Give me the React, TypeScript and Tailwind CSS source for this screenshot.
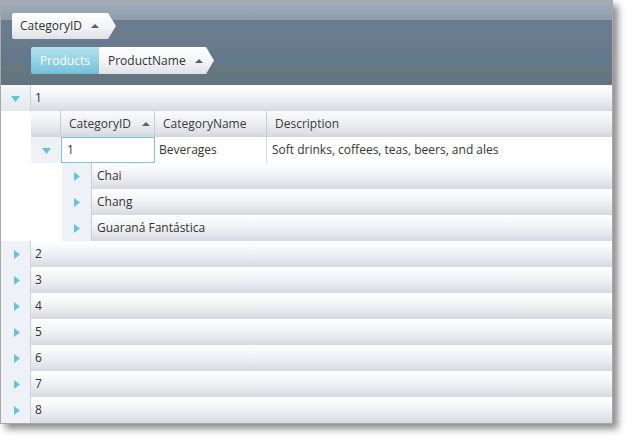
import React from 'react';

const rowBg = 'bg-[linear-gradient(to_bottom,#ffffff_0%,#f5f6f9_35%,#e4e6eb_75%,#d6d9df_100%)]';
const headBg = 'bg-[linear-gradient(to_bottom,#fbfbfc_0%,#eeeff2_45%,#dcdfe4_85%,#d2d5db_100%)]';

function TriRight() {
    return (
        <svg width="6" height="9" viewBox="0 0 6 9" className="shrink-0">
            <path d="M0 0 L6 4.5 L0 9 Z" fill="#62c4e2" />
        </svg>
    );
}

function TriDown() {
    return (
        <svg width="9" height="6" viewBox="0 0 9 6" className="shrink-0">
            <path d="M0 0 L9 0 L4.5 6 Z" fill="#62c4e2" />
        </svg>
    );
}

function SortUp() {
    return (
        <svg width="8" height="4" viewBox="0 0 8 4" className="shrink-0">
            <path d="M0 4 L4 0 L8 4 Z" fill="#5a6068" />
        </svg>
    );
}

// Group chip with pointed right end
function Chip({ label, className = '' }: { label: string; className?: string }) {
    return (
        <div
            className={`h-[26px] shrink-0 flex items-center text-[#333] bg-[linear-gradient(to_bottom,#ffffff_0%,#f4f5f7_50%,#dfe1e6_100%)] [clip-path:polygon(0_0,calc(100%-8px)_0,100%_50%,calc(100%-8px)_100%,0_100%)] ${className}`}
        >
            <span className="whitespace-nowrap">{label}</span>
            <span className="ml-[9px] flex">
                <SortUp />
            </span>
        </div>
    );
}

function OuterRow({ id }: { id: number }) {
    return (
        <div className="h-[26px] flex">
            <div className="w-[30px] shrink-0 bg-[#eef1f5] border-r border-[#cdd1d7] flex items-center justify-center pl-[2px]">
                <TriRight />
            </div>
            <div className={`flex-1 ${rowBg} flex items-center pl-[4px]`}>{id}</div>
        </div>
    );
}

function ProductRow({ name }: { name: string }) {
    return (
        <div className="h-[26px] flex">
            <div className="w-[61px] shrink-0 bg-white" />
            <div className="w-[30px] shrink-0 bg-[#eef1f5] border-r border-[#cdd1d7] flex items-center justify-center pl-[1px]">
                <TriRight />
            </div>
            <div className={`flex-1 ${rowBg} flex items-center pl-[5px]`}>{name}</div>
        </div>
    );
}

export default function App() {
    const products = ['Chai', 'Chang', 'Guaraná Fantástica'];
    const rest = [2, 3, 4, 5, 6, 7, 8];

    return (
        <div className="w-[632px] h-[443px] bg-white font-['Open_Sans',sans-serif] text-[12px] text-[#333] leading-none">
            <div className="w-[613px] h-[424px] border border-[#a9a9a9] shadow-[5px_5px_7px_rgba(0,0,0,0.45)] flex flex-col overflow-hidden bg-white">
                {/* Group panel */}
                <div className="h-[84px] shrink-0 pt-[12px] pl-[11px] bg-[linear-gradient(to_bottom,#a4aeba_0px,#8f9cab_19px,#697c90_19px,#6a7b8c_40px,#62778b_60px,#65797f_66px,#62737f_84px)]">
                    <Chip label="CategoryID" className="w-[104px] pl-[8px] rounded-l-[2px]" />
                    <div className="flex mt-[8px] ml-[19px]">
                        <div className="h-[27px] w-[68px] shrink-0 flex items-center justify-center text-white bg-[linear-gradient(to_bottom,#b4e1ee_0%,#94d2e6_50%,#75c1d8_100%)] rounded-l-[2px]">
                            Products
                        </div>
                        <Chip label="ProductName" className="h-[27px] w-[115px] pl-[9px]" />
                    </div>
                </div>

                {/* Row 1 expanded */}
                <div className="h-[26px] flex">
                    <div className="w-[30px] shrink-0 bg-[linear-gradient(to_bottom,#f3f5f8,#e5e8ed)] border-r border-[#cdd1d7] flex items-center justify-center pt-[1px]">
                        <TriDown />
                    </div>
                    <div className={`flex-1 ${rowBg} flex items-center pl-[4px]`}>1</div>
                </div>

                {/* Nested header */}
                <div className="h-[26px] flex">
                    <div className="w-[30px] shrink-0 bg-white" />
                    <div className={`w-[30px] shrink-0 ${headBg} border-r border-[#c9cdd3]`} />
                    <div className={`w-[94px] shrink-0 ${headBg} border-r border-[#c9cdd3] flex items-center justify-between pl-[8px] pr-[4px] text-[#3a3a3a]`}>
                        <span>CategoryID</span>
                        <SortUp />
                    </div>
                    <div className={`w-[112px] shrink-0 ${headBg} border-r border-[#c9cdd3] flex items-center pl-[8px] text-[#3a3a3a]`}>
                        CategoryName
                    </div>
                    <div className={`flex-1 ${headBg} flex items-center pl-[8px] text-[#3a3a3a]`}>Description</div>
                </div>

                {/* Nested data row */}
                <div className="h-[26px] flex bg-white">
                    <div className="w-[30px] shrink-0 bg-white" />
                    <div className="w-[30px] shrink-0 bg-[#eef1f5] flex items-center justify-center pt-[1px]">
                        <TriDown />
                    </div>
                    <div className="w-[94px] shrink-0 border border-[#7cc6dc] flex items-center pl-[5px]">1</div>
                    <div className="w-[112px] shrink-0 border-r border-[#d7dade] flex items-center pl-[4px]">Beverages</div>
                    <div className="flex-1 flex items-center pl-[5px]">Soft drinks, coffees, teas, beers, and ales</div>
                </div>

                {products.map(p => (
                    <ProductRow key={p} name={p} />
                ))}

                {rest.map(id => (
                    <OuterRow key={id} id={id} />
                ))}
            </div>
        </div>
    );
}
